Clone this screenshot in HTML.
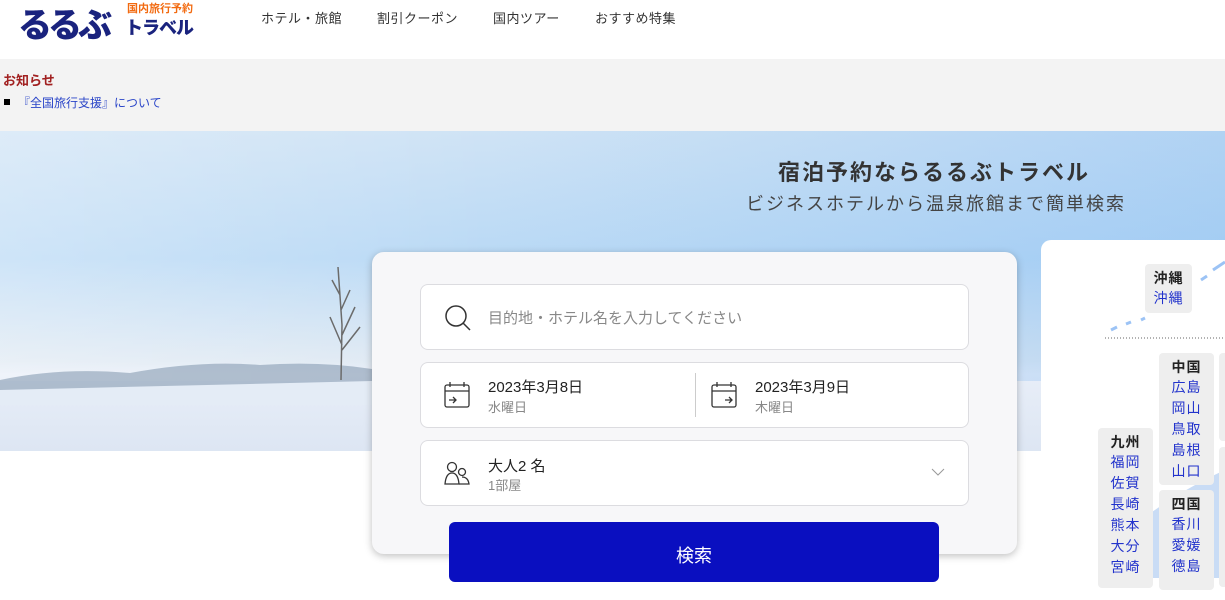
<!DOCTYPE html>
<html><head><meta charset="utf-8"><style>
*{margin:0;padding:0;box-sizing:border-box}
body{width:1225px;height:578px;overflow:hidden;background:#fff;font-family:"Liberation Sans","Noto Sans CJK JP",sans-serif;position:relative}
.abs{position:absolute}
.nav{font-size:13px;color:#333;top:8px;letter-spacing:.5px}
.hero{left:0;top:131px;width:1225px;height:320px;background:linear-gradient(180deg,#cfe3f5 0%,#b9d9f5 40%,#dfe9f3 72%,#e8eef8 76%,#dde6f3 100%)}
.hero:after{content:"";position:absolute;left:0;right:0;top:0;height:250px;background:linear-gradient(90deg,rgba(255,255,255,.3),rgba(255,255,255,0) 40%,rgba(120,180,240,.35))}
.box{left:372px;top:252px;width:645px;height:302px;background:#f7f7f9;border-radius:12px;box-shadow:0 2px 8px rgba(0,0,0,.25)}
.fld{position:absolute;left:48px;width:549px;background:#fff;border:1px solid #dcdce0;border-radius:8px}
.card{position:absolute;background:#eee;border-radius:4px;font-size:14px;line-height:21px;text-align:center;color:#2233cc;letter-spacing:1px}
.card b{color:#222;font-size:14px;display:block;line-height:19px}
</style></head><body>
<div class="abs" style="left:18px;top:-2px;font-size:34px;font-weight:900;color:#1a237e;letter-spacing:-4px">るるぶ</div>
<div class="abs" style="left:127px;top:0;font-size:11px;font-weight:bold;color:#f26a10">国内旅行予約</div>
<div class="abs" style="left:125px;top:14px;font-size:18px;font-weight:900;color:#1a237e;letter-spacing:-1px">トラベル</div>
<div class="abs nav" style="left:261px">ホテル・旅館</div>
<div class="abs nav" style="left:377px">割引クーポン</div>
<div class="abs nav" style="left:493px">国内ツアー</div>
<div class="abs nav" style="left:595px">おすすめ特集</div>
<div class="abs" style="left:0;top:59px;width:1225px;height:72px;background:#f3f3f3"></div>
<div class="abs" style="left:3px;top:70px;font-size:13px;font-weight:bold;color:#a12020">お知らせ</div>
<div class="abs" style="left:4px;top:99px;width:6px;height:6px;background:#000"></div>
<div class="abs" style="left:18px;top:94px;font-size:12px;color:#2a45c8">『全国旅行支援』について</div>
<div class="abs hero"></div>
<svg class="abs" style="left:0;top:255px" width="372" height="150"><path d="M0 125 Q60 112 130 118 Q200 105 260 110 Q320 106 372 114 L372 150 L0 150Z" fill="#7d93ab" opacity=".55"/><path d="M0 135 L372 126 L372 150 L0 150Z" fill="#e4ecf6"/><path d="M341 125 L342 70 M342 90 L330 62 M342 80 L355 52 M342 70 L338 12 M342 95 L360 72 M340 40 L332 25 M341 55 L350 35" stroke="#6b6b6b" stroke-width="1.5" fill="none"/></svg>
<div class="abs" style="left:778px;top:155px;font-size:22px;font-weight:bold;color:#333;letter-spacing:2px">宿泊予約ならるるぶトラベル</div>
<div class="abs" style="left:746px;top:190px;font-size:18px;color:#444;letter-spacing:2px">ビジネスホテルから温泉旅館まで簡単検索</div>
<div class="abs box">
 <div class="fld" style="top:32px;height:66px">
  <svg class="abs" style="left:22px;top:18px" width="30" height="30"><circle cx="13" cy="13" r="10" stroke="#333" stroke-width="1.5" fill="none"/><path d="M20 20 L27 27" stroke="#333" stroke-width="1.5"/></svg>
  <div class="abs" style="left:67px;top:22px;font-size:15px;color:#888">目的地・ホテル名を入力してください</div>
 </div>
 <div class="fld" style="top:110px;height:66px">
  <svg class="abs" style="left:22px;top:18px" width="30" height="30"><rect x="2" y="4" width="24" height="22" rx="2" stroke="#333" stroke-width="1.3" fill="none"/><path d="M2 10 H26 M7 1 V6 M21 1 V6 M6 19 H13 M10 16 L13 19 L10 22" stroke="#333" stroke-width="1.3" fill="none"/></svg>
  <div class="abs" style="left:67px;top:13px;font-size:15px;color:#222">2023年3月8日</div>
  <div class="abs" style="left:67px;top:34px;font-size:13px;color:#888">水曜日</div>
  <div class="abs" style="left:274px;top:10px;width:1px;height:44px;background:#ccc"></div>
  <svg class="abs" style="left:289px;top:18px" width="30" height="30"><rect x="2" y="4" width="24" height="22" rx="2" stroke="#333" stroke-width="1.3" fill="none"/><path d="M2 10 H26 M7 1 V6 M21 1 V6 M15 19 H22 M19 16 L22 19 L19 22" stroke="#333" stroke-width="1.3" fill="none"/></svg>
  <div class="abs" style="left:334px;top:13px;font-size:15px;color:#222">2023年3月9日</div>
  <div class="abs" style="left:334px;top:34px;font-size:13px;color:#888">木曜日</div>
 </div>
 <div class="fld" style="top:188px;height:66px">
  <svg class="abs" style="left:22px;top:18px" width="30" height="30"><circle cx="9" cy="8" r="4.5" stroke="#333" stroke-width="1.3" fill="none"/><path d="M2 25 Q3 14 9 14 Q15 14 16 25Z" stroke="#333" stroke-width="1.3" fill="none"/><circle cx="19" cy="13" r="3.5" stroke="#333" stroke-width="1.3" fill="none"/><path d="M16 25 H26 Q25 18 19 18" stroke="#333" stroke-width="1.3" fill="none"/></svg>
  <div class="abs" style="left:67px;top:14px;font-size:15px;color:#222">大人2 名</div>
  <div class="abs" style="left:67px;top:34px;font-size:13px;color:#888">1部屋</div>
  <svg class="abs" style="left:510px;top:26px" width="14" height="10"><path d="M1 2 L7 8 L13 2" stroke="#999" fill="none"/></svg>
 </div>
 <div class="abs" style="left:77px;top:270px;width:490px;height:60px;background:#0a0fc0;border-radius:6px;color:#fff;font-size:18px;text-align:center;padding-top:20px">検索</div>
</div>
<div class="abs" style="left:1041px;top:240px;width:200px;height:360px;background:#fff;border-radius:10px;overflow:hidden">
 <svg class="abs" style="left:0;top:0" width="184" height="338"><path d="M70 90 L76 87 M85 84 L90 82 M100 80 L104 78 M140 60 L146 56 M160 40 L166 36 M172 30 L184 22" stroke="#9cc3f5" stroke-width="3"/><path d="M64 98 H184" stroke="#666" stroke-dasharray="1 2"/><path d="M100 280 Q140 250 184 230 L184 338 L110 338 Q90 300 100 280Z" fill="#c9dcf5"/></svg>
 <div class="card" style="left:104px;top:24px;width:47px;height:49px;padding-top:5px"><b>沖縄</b>沖縄</div>
 <div class="card" style="left:118px;top:113px;width:55px;height:132px;padding-top:5px"><b>中国</b>広島<br>岡山<br>鳥取<br>島根<br>山口</div>
 <div class="card" style="left:57px;top:188px;width:55px;height:160px;padding-top:5px"><b>九州</b>福岡<br>佐賀<br>長崎<br>熊本<br>大分<br>宮崎</div>
 <div class="card" style="left:118px;top:250px;width:55px;height:100px;padding-top:5px"><b>四国</b>香川<br>愛媛<br>徳島</div>
 <div class="card" style="left:178px;top:113px;width:20px;height:88px"></div>
 <div class="card" style="left:178px;top:207px;width:20px;height:140px"></div>
</div>
</body></html>
